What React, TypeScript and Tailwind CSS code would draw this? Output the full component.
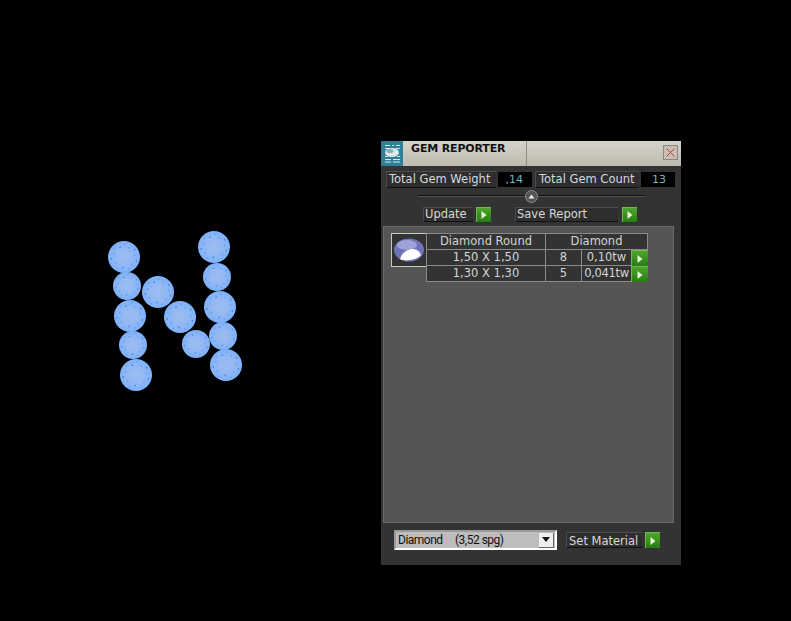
import React from 'react';

const gems = [
  { x: 124, y: 257, d: 32 },
  { x: 127, y: 286, d: 28 },
  { x: 130, y: 316, d: 32 },
  { x: 133, y: 345, d: 28 },
  { x: 136, y: 375, d: 32 },
  { x: 158, y: 292, d: 32 },
  { x: 180, y: 317, d: 32 },
  { x: 196, y: 344, d: 28 },
  { x: 214, y: 247, d: 32 },
  { x: 217, y: 277, d: 28 },
  { x: 220, y: 307, d: 32 },
  { x: 223, y: 336, d: 28 },
  { x: 226, y: 365, d: 32 },
];

const dots = Array.from({ length: 14 }, (_, i) => (i / 14) * Math.PI * 2 + 0.3);

function Gem({ x, y, d }: { x: number; y: number; d: number }) {
  return (
    <svg
      className="absolute"
      style={{ left: x - d / 2, top: y - d / 2, width: d, height: d }}
      viewBox="0 0 32 32"
    >
      <defs>
        <radialGradient id="gemFill">
          <stop offset="0%" stopColor="#9dbdf0" />
          <stop offset="55%" stopColor="#92b8f4" />
          <stop offset="100%" stopColor="#7db1fb" />
        </radialGradient>
      </defs>
      <circle cx="16" cy="16" r="16" fill="url(#gemFill)" />
      {dots.map((a, i) => (
        <circle
          key={i}
          cx={16 + Math.cos(a) * (i % 2 ? 10.5 : 13)}
          cy={16 + Math.sin(a) * (i % 2 ? 10.5 : 13)}
          r="0.85"
          fill={i % 3 === 0 ? '#4f86d6' : '#6b9fe6'}
        />
      ))}
    </svg>
  );
}

function GreenButton({ className = '' }: { className?: string }) {
  return (
    <div className={`flex items-center justify-center bg-gradient-to-b from-[#4fa52c] to-[#267d12] border-t border-l border-[#6cbc4c] ${className}`}>
      <svg width="6" height="8" viewBox="0 0 6 8">
        <path d="M0.5 0 L5.5 4 L0.5 8 Z" fill="#e6f5d8" />
      </svg>
    </div>
  );
}

function Label({ text, className = '' }: { text: string; className?: string }) {
  return (
    <div className={`flex items-center bg-[#2e2e2e] border-t border-l border-[#4c4c4c] border-b-[#111] border-b text-[#d8d8d8] text-[11.5px] leading-none ${className}`}>
      {text}
    </div>
  );
}

function Cell({ children, className = '' }: { children: React.ReactNode; className?: string }) {
  return (
    <div className={`flex items-center justify-center bg-[#333] border-r border-b border-[#8a8a8a] text-[#d4d4d4] text-[11.5px] leading-none ${className}`}>
      {children}
    </div>
  );
}

export default function App() {
  return (
    <div className="relative w-[791px] h-[621px] bg-black overflow-hidden pt-[141px] pl-[381px] font-['DejaVu_Sans',sans-serif]">
      {gems.map((g, i) => (
        <Gem key={i} {...g} />
      ))}

      <div className="flex flex-col w-[300px] h-[424px] bg-[#333333]">
        {/* title bar */}
        <div className="flex h-[25px] shrink-0">
          <div className="w-[22px] bg-[#2f7f96] flex items-center justify-center">
            <svg width="20" height="22" viewBox="0 0 20 22">
              <g stroke="#cfe9ee" strokeWidth="1">
                <path d="M3 2.5h5M10 2.5h2M14 2.5h4M3 5.5h4M14 5.5h4M3 16.5h6M11 16.5h7M3 19h6M11 19h7M3 13.5h3M15 13.5h3" />
              </g>
              <ellipse cx="10" cy="9.5" rx="7" ry="4.5" fill="#dfe8ea" />
              <ellipse cx="8" cy="8" rx="3.5" ry="2" fill="#8fa8b8" />
            </svg>
          </div>
          <div className="flex-1 flex bg-gradient-to-b from-[#d6d3ca] to-[#bdbab0]">
            <div className="w-[124px] border-r border-[#8f8c84] pl-[8px] pt-[1px] text-[#111] text-[11px] font-bold leading-[13px]">
              <span className="tracking-[-0.15px]">GEM REPORTER</span>
            </div>
            <div className="flex-1 flex justify-end pt-[4px] pr-[3px]">
              <div className="w-[15px] h-[15px] flex items-center justify-center bg-[#cbbdb4] border border-[#8a8880]">
                <svg width="9" height="9" viewBox="0 0 9 9">
                  <path d="M0.5 0.5 L8.5 8.5 M8.5 0.5 L0.5 8.5" stroke="#a8483e" strokeWidth="1" />
                </svg>
              </div>
            </div>
          </div>
        </div>

        {/* totals */}
        <div className="flex h-[17px] mt-[5px] ml-[5px] shrink-0">
          <Label text="Total Gem Weight" className="w-[110px] pl-[2px]" />
          <div className="w-[36px] ml-[1px] bg-black border border-[#333] flex items-center justify-end pr-[9px] text-[#6fb8c0] text-[11px] leading-none">,14</div>
          <Label text="Total Gem Count" className="w-[104px] ml-[2px] pl-[3px]" />
          <div className="w-[36px] ml-[1px] bg-black border border-[#333] flex items-center justify-end pr-[9px] text-[#6fb8c0] text-[11px] leading-none">13</div>
        </div>

        {/* collapse slider */}
        <div className="flex items-center h-[14px] mt-[1px] ml-[37px] w-[226px] shrink-0">
          <div className="flex-1 h-px bg-[#111] border-b border-[#555] box-content" />
          <div className="w-[13px] h-[13px] rounded-full bg-[#555] border border-[#888] flex items-center justify-center">
            <svg width="7" height="5" viewBox="0 0 7 5">
              <path d="M3.5 0.5 L6.5 4.5 L0.5 4.5 Z" fill="#eee" />
            </svg>
          </div>
          <div className="w-[106px] h-px bg-[#111] border-b border-[#555] box-content" />
        </div>

        {/* actions */}
        <div className="flex h-[15px] mt-[4px] ml-[42px] shrink-0">
          <Label text="Update" className="w-[50px] pl-[1px]" />
          <GreenButton className="w-[15px] ml-[3px]" />
          <Label text="Save Report" className="w-[103px] ml-[24px] pl-[1px]" />
          <GreenButton className="w-[15px] ml-[4px]" />
        </div>

        {/* report area */}
        <div className="h-[297px] w-[291px] ml-[2px] mt-[4px] bg-[#555555] border border-[#6a6a6a] pt-[6px] pl-[7px] flex shrink-0">
          <div className="w-[36px] h-[34px] bg-[#333] border border-[#c8c8c8] flex items-center justify-center shrink-0">
            <svg width="32" height="26" viewBox="0 0 32 26">
              <ellipse cx="16" cy="13" rx="15" ry="11.5" fill="#6f73b8" />
              <ellipse cx="14" cy="8" rx="10" ry="5" fill="#9ea4d8" />
              <path d="M7 22 C9 15 15 12 20 12 C24 12 27 15 28 18 C24 23 12 25 7 22 Z" fill="#ffffff" />
            </svg>
          </div>
          <div className="w-[222px] -ml-[1px] grid grid-cols-[119px_36px_49px_17px] grid-rows-[16px_16px_16px] h-[49px] border-t border-l border-[#8a8a8a]">
            <Cell>Diamond Round</Cell>
            <Cell className="col-span-3">Diamond</Cell>
            <Cell>1,50 X 1,50</Cell>
            <Cell>8</Cell>
            <Cell className="border-r-0">0,10tw</Cell>
            <GreenButton />
            <Cell>1,30 X 1,30</Cell>
            <Cell>5</Cell>
            <Cell className="border-r-0"><span className="tracking-[-0.3px]">0,041tw</span></Cell>
            <GreenButton />
          </div>
        </div>

        {/* material */}
        <div className="flex items-center h-[20px] mt-[7px] ml-[13px] shrink-0">
          <div className="w-[163px] h-[20px] bg-[#bdbdbd] border-2 border-white border-t-[#9a9a9a] border-l-[#9a9a9a] flex items-center justify-between pl-[2px] pr-[1px] text-[#111] text-[12px] leading-none font-['Roboto',sans-serif]">
            <span className="flex tracking-[-0.5px]">
              <span className="w-[57px]">Diamond</span>
              <span>(3,52 spg)</span>
            </span>
            <div className="w-[15px] h-[15px] bg-[#eeeeee] border-r border-b border-[#666] flex items-center justify-center">
              <svg width="8" height="5" viewBox="0 0 8 5">
                <path d="M0 0 H8 L4 5 Z" fill="#111" />
              </svg>
            </div>
          </div>
          <Label text="Set Material" className="w-[76px] h-[16px] ml-[9px] pl-[2px] pt-[3px]" />
          <GreenButton className="w-[15px] h-[16px] ml-[3px]" />
        </div>
      </div>
    </div>
  );
}
